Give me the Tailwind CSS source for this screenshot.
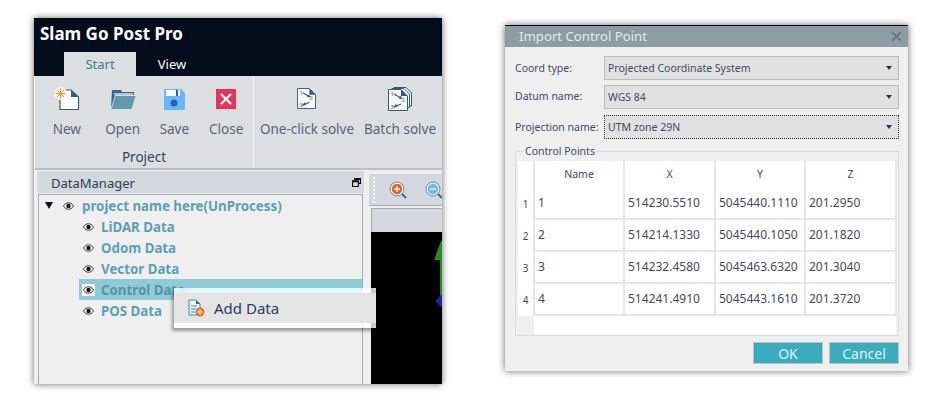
<!DOCTYPE html>
<html lang="en">
<head>
  <meta charset="UTF-8" />
  <title>Slam Go Post Pro</title>
  <script src="https://cdn.jsdelivr.net/npm/@tailwindcss/browser@4"></script>
</head>
<body class="bg-white font-['Noto_Sans',sans-serif]">
  <svg class="hidden">
    <symbol id="eye" viewBox="0 0 12 8">
      <path d="M0.5 4C2.5 1 4 .5 6 .5S9.5 1 11.5 4C9.5 7 8 7.500 6 7.500S2.500 7 .5 4Z" fill="#fff" stroke="#222" stroke-width="1"/>
      <circle cx="6" cy="4" r="2.400" fill="#111"/>
    </symbol>
    <symbol id="solve" viewBox="0 0 20 22">
      <path d="M.5.500H13L19.500 7V21.500H.5Z" fill="#f7f8f9" stroke="#2f5c7c"/>
      <path d="M13 .5L19.500 7H13Z" fill="#2f5c7c"/>
      <text x="2.500" y="7" font-size="6" font-weight="700" fill="#ee7f35">1</text>
      <text x="13.500" y="13" font-size="6" font-weight="700" fill="#ee7f35">2</text>
      <text x="2.500" y="20" font-size="6" font-weight="700" fill="#ee7f35">3</text>
      <path d="M6 5L13 9M13 15L6 18" stroke="#2f5c7c" stroke-width="1.200"/>
      <path d="M14.500 10L10.500 9.500L12.500 6.800ZM5 18.500L8 15L9.500 17.800Z" fill="#2f5c7c"/>
    </symbol>
  </svg>

  <div class="w-[951px] h-[415px] overflow-hidden flex items-start pl-[34px] pt-[18px] gap-[63px]">

    <!-- main window -->
    <div class="relative w-[408px] h-[366px] shrink-0 bg-[#efefef] shadow-[0_0_7px_rgba(0,0,0,0.6)]">
      <div class="h-[58px] bg-[#020c1b] relative">
        <div class="pl-[6px] pt-[4px] text-[17px] leading-[24px] font-bold text-white">Slam Go Post Pro</div>
        <div class="absolute left-[30px] bottom-0 flex text-[13px]">
          <div class="w-[72px] h-[24px] bg-[#dcdfe2] text-[#3b7d94] flex items-center justify-center pt-[2px]">Start</div>
          <div class="w-[72px] h-[24px] text-white flex items-center justify-center pt-[2px]">View</div>
        </div>
      </div>

      <div class="h-[92px] flex bg-[#dcdfe2] border-b-2 border-[#bcc0c4] border-l border-l-white text-[13.500px] text-[#57627a] box-content">
        <div class="w-[219px] border-r border-[#f5f6f6] flex flex-col">
          <div class="flex pl-[3px] pt-[11px]">
            <div class="w-[58px] flex flex-col items-center">
              <svg class="h-[24px] w-[26px]" viewBox="0 0 26 24">
                <path d="M6 3H17L24.500 10V22.500H6Z" fill="#fff" stroke="#2f5c7c" stroke-width="1.200"/>
                <path d="M17 3L24.500 10H17Z" fill="#2f5c7c"/>
                <circle cx="6.500" cy="6.500" r="6.500" fill="#f6f6f6"/>
                <path d="M6.500 1.500V11.500M1.500 6.500H11.500M3 3L10 10M10 3L3 10" stroke="#ee8a2c" stroke-width="1"/>
                <circle cx="6.500" cy="6.500" r="2" fill="#f5a623"/>
              </svg>
              <span class="mt-[8px] leading-[20px]">New</span>
            </div>
            <div class="w-[54px] flex flex-col items-center">
              <svg class="h-[24px] w-[26px]" viewBox="0 0 26 24">
                <path d="M2 3H11L12 5H24V8H5L1 21Z" fill="#3b6a8a"/>
                <path d="M4 7H23" stroke="#fff" stroke-width="1.200"/>
                <path d="M5.500 9H25.500L21.500 22H1.500Z" fill="#5f9bad"/>
              </svg>
              <span class="mt-[8px] leading-[20px]">Open</span>
            </div>
            <div class="w-[50px] flex flex-col items-center">
              <svg class="h-[24px] w-[24px]" viewBox="0 0 24 24">
                <path d="M2 2H19L23 6V23H2Z" fill="#66b7fd"/>
                <path d="M4 3H18V9H4Z" fill="#fff"/>
                <path d="M14 3H16V9H14Z" fill="#2d62a8"/>
                <circle cx="12" cy="16" r="3.500" fill="#2d62a8"/>
              </svg>
              <span class="mt-[8px] leading-[20px]">Save</span>
            </div>
            <div class="w-[54px] flex flex-col items-center">
              <svg class="h-[24px] w-[24px]" viewBox="0 0 24 24">
                <rect x="2" y="2" width="20" height="20" fill="#e1375a"/>
                <path d="M7 7L17 17M17 7L7 17" stroke="#fff" stroke-width="2.200"/>
              </svg>
              <span class="mt-[8px] leading-[20px]">Close</span>
            </div>
          </div>
          <div class="mt-[8px] text-center text-[#2e4566] leading-[20px]">Project</div>
        </div>
        <div class="flex pt-[11px] items-start">
          <div class="w-[106px] flex flex-col items-center">
            <svg class="h-[24px] w-[22px]"><use href="#solve" x="1" y="1" width="19" height="21"/></svg>
            <span class="mt-[8px] leading-[20px] whitespace-nowrap">One-click solve</span>
          </div>
          <div class="w-[80px] flex flex-col items-center">
            <svg class="h-[24px] w-[26px]" viewBox="0 0 26 24">
              <path d="M7 .5H19L24.500 6V19H7Z" fill="#f7f8f9" stroke="#2f5c7c"/>
              <path d="M5 1.500H17L22.500 7V20.500H5Z" fill="#f7f8f9" stroke="#2f5c7c"/>
              <use href="#solve" x="1" y="2" width="20" height="22"/>
            </svg>
            <span class="mt-[8px] leading-[20px] whitespace-nowrap">Batch solve</span>
          </div>
        </div>
      </div>

      <div class="flex h-[214px] pl-[3px] pt-[1px]">
        <div class="w-[327px] flex flex-col">
          <div class="h-[22px] bg-[#d3d8df] flex items-center justify-between pl-[14px] pr-[3px] text-[13px] text-[#2c3e55]">
            <span class="pt-[3px]">DataManager</span>
            <svg class="w-[9px] h-[9px]" viewBox="0 0 10 10" fill="none" stroke="#000" stroke-width="1.200">
              <path d="M3 2.500V.6H9.400V6H7.500"/>
              <path d="M.6 3H7V9.400H.6Z" fill="#d3d8df"/>
              <path d="M3 1.500H9M.6 4H7" />
            </svg>
          </div>
          <div class="mt-[1px] ml-[1px] w-[325px] flex-1 border border-b-0 border-[#9fadb5] text-[13.300px] font-bold text-[#5b9fb6]">
            <div class="h-[21px] flex items-center">
              <div class="ml-[6px] w-0 h-0 border-x-[4px] border-x-transparent border-t-[7px] border-t-[#111]"></div>
              <svg class="ml-[10px] w-[11px] h-[8px]"><use href="#eye"/></svg>
              <span class="ml-[8px] pt-[2px]">project name here(UnProcess)</span>
            </div>
            <div class="h-[21px] flex items-center pl-[44px]">
              <svg class="w-[11px] h-[8px]"><use href="#eye"/></svg>
              <span class="ml-[7px] pt-[2px]">LiDAR Data</span>
            </div>
            <div class="h-[21px] flex items-center pl-[44px]">
              <svg class="w-[11px] h-[8px]"><use href="#eye"/></svg>
              <span class="ml-[7px] pt-[2px]">Odom Data</span>
            </div>
            <div class="h-[21px] flex items-center pl-[44px]">
              <svg class="w-[11px] h-[8px]"><use href="#eye"/></svg>
              <span class="ml-[7px] pt-[2px]">Vector Data</span>
            </div>
            <div class="h-[21px] w-[283px] ml-[40px] flex items-center bg-[#8ecbd6] pl-[3px] text-[#5594a8]">
              <div class="bg-white w-[13px] h-[12px] flex items-center justify-center">
                <svg class="w-[11px] h-[8px]"><use href="#eye"/></svg>
              </div>
              <span class="ml-[6px] pt-[2px]">Control Data</span>
            </div>
            <div class="h-[21px] flex items-center pl-[44px]">
              <svg class="w-[11px] h-[8px]"><use href="#eye"/></svg>
              <span class="ml-[7px] pt-[2px]">POS Data</span>
            </div>
          </div>
        </div>

        <div class="ml-[5px] flex-1 flex flex-col overflow-hidden relative">
          <div class="mt-[3px] h-[32px] bg-[#d3d8df] border-b border-[#9fadb5] flex items-center pl-[4px]">
            <div class="w-[2px] h-[26px] border-l-2 border-dotted border-[#f5f5f5]"></div>
            <svg class="ml-[14px] w-[18px] h-[18px] shrink-0" viewBox="0 0 18 18">
              <path d="M12 12L17 17" stroke="#3b6a8a" stroke-width="2"/>
              <circle cx="8" cy="8" r="7" fill="#e8eef2" stroke="#6d8a9c"/>
              <circle cx="8" cy="8" r="5.200" fill="#e2641a"/>
              <path d="M8 5V11M5 8H11" stroke="#fff" stroke-width="1.300"/>
            </svg>
            <svg class="ml-[18px] w-[18px] h-[18px] shrink-0" viewBox="0 0 18 18">
              <path d="M12 12L17 17" stroke="#3b6a8a" stroke-width="2"/>
              <circle cx="8" cy="8" r="7" fill="#e8eef2" stroke="#6d8a9c"/>
              <circle cx="8" cy="8" r="5.200" fill="#6bb8f5"/>
              <path d="M5 8H11" stroke="#fff" stroke-width="1.300"/>
            </svg>
          </div>
          <div class="ml-[2px] mt-[2px] h-[24px] bg-[#d3d8df] border border-[#9fadb5] border-b-0 border-r-0"></div>
          <div class="ml-[2px] flex-1 bg-black"></div>
          <!-- axis drawn in the viewer -->
          <svg class="absolute left-[64px] top-[68px] w-[9px] h-[70px]" viewBox="0 0 9 70">
            <path d="M8 2L1 21H7V57H9V2Z" fill="#2a8a24"/>
            <path d="M2 62L8 56H9V68H8Z" fill="#22229a"/>
          </svg>
        </div>
      </div>

      <!-- context menu -->
      <div class="absolute left-[140px] top-[270px] w-[202px] h-[40px] bg-white/80 py-[5px] shadow-[-2px_3px_3px_rgba(0,0,0,0.35)] flex">
        <div class="w-full h-[30px] bg-[#e4e4e4] flex items-center pl-[14px]">
          <svg class="w-[17px] h-[18px]" viewBox="0 0 17 18">
            <path d="M1 1H8L12 5V16H1Z" fill="#eaf5fb" stroke="#3a8fb0"/>
            <path d="M8 1L12 5H8Z" fill="#2f6f8c"/>
            <path d="M3 7H9M3 10H8M3 13H7" stroke="#3a8fb0"/>
            <circle cx="12" cy="13" r="4.500" fill="#ee7422"/>
            <path d="M12 10.500V15.500M9.500 13H14.500" stroke="#fff" stroke-width="1.200"/>
          </svg>
          <span class="ml-[9px] text-[15px] text-[#2b3c5e] pt-[1px]">Add Data</span>
        </div>
      </div>
    </div>

    <!-- import dialog -->
    <div class="w-[403px] h-[346px] mt-[7px] shrink-0 bg-[#efefef] border-t border-black shadow-[0_0_7px_rgba(0,0,0,0.6)] text-[10.500px] text-[#3d4a66]">
      <div class="h-[21px] bg-[#8a9ea3] flex items-center justify-between pl-[14px] pr-[6px] text-[13.200px] text-[#e3eaec]">
        <span>Import Control Point</span>
        <svg class="w-[11px] h-[11px]" viewBox="0 0 11 11"><path d="M1 1L10 10M10 1L1 10" stroke="#5f7075" stroke-width="1.600"/></svg>
      </div>

      <div class="flex flex-col pl-[10px] pr-[9px] pt-[9px]">
        <div class="flex items-center h-[24px]">
          <span class="w-[89px] pt-[2px]">Coord type:</span>
          <div class="flex-1 h-full bg-[#e1e1e1] border border-[#bbb] flex items-center justify-between pl-[3px] pr-[6px]">
            <span class="pt-[2px]">Projected Coordinate System</span>
            <div class="w-0 h-0 border-x-[3px] border-x-transparent border-t-[4px] border-t-[#1f3350]"></div>
          </div>
        </div>
        <div class="flex items-center h-[24px] mt-[5px]">
          <span class="w-[89px]">Datum name:</span>
          <div class="flex-1 h-full bg-[#e1e1e1] border border-[#bbb] flex items-center justify-between pl-[3px] pr-[6px]">
            <span class="pt-[2px]">WGS 84</span>
            <div class="w-0 h-0 border-x-[3px] border-x-transparent border-t-[4px] border-t-[#1f3350]"></div>
          </div>
        </div>
        <div class="flex items-center h-[24px] mt-[6px]">
          <span class="w-[89px] pt-[2px] whitespace-nowrap">Projection name:</span>
          <div class="flex-1 h-full bg-[#e1e1e1] border border-dotted border-[#333] flex items-center justify-between pl-[3px] pr-[6px]">
            <span class="pt-[2px]">UTM zone 29N</span>
            <div class="w-0 h-0 border-x-[3px] border-x-transparent border-t-[4px] border-t-[#1f3350]"></div>
          </div>
        </div>

        <div class="relative mt-[12px] h-[185px] border border-[#dcdcdc] pl-[2px] pt-[9px]">
          <span class="absolute left-[8px] -top-[8px] px-[1px] bg-[#efefef] leading-[15px]">Control Points</span>
          <table class="table-fixed border-collapse w-[378px] bg-white text-[12px] text-[#3d4a66]">
            <colgroup>
              <col class="w-[16px]" /><col class="w-[90px]" /><col class="w-[91px]" /><col class="w-[90px]" /><col class="w-[91px]" />
            </colgroup>
            <thead>
              <tr class="h-[26px] text-[10.500px] font-normal">
                <th class="font-normal border-r-2 border-[#e6e6e6]"></th>
                <th class="font-normal border-r-2 border-[#e6e6e6] pt-[2px]">Name</th>
                <th class="font-normal border-r-2 border-[#e6e6e6] pt-[2px]">X</th>
                <th class="font-normal border-r-2 border-[#e6e6e6] pt-[2px]">Y</th>
                <th class="font-normal border-r-2 border-[#e6e6e6] pt-[2px]">Z</th>
              </tr>
            </thead>
            <tbody>
              <tr class="h-[32px]">
                <td class="text-[10px] text-center pt-[2px]">1</td>
                <td class="pl-[3px] border-x-2 border-b-2 border-[#e6e6e6]">1</td>
                <td class="pl-[3px] border-x-2 border-b-2 border-[#e6e6e6]">514230.5510</td>
                <td class="pl-[3px] border-x-2 border-b-2 border-[#e6e6e6]">5045440.1110</td>
                <td class="pl-[3px] border-x-2 border-b-2 border-[#e6e6e6]">201.2950</td>
              </tr>
              <tr class="h-[32px]">
                <td class="text-[10px] text-center pt-[2px]">2</td>
                <td class="pl-[3px] border-x-2 border-b-2 border-[#e6e6e6]">2</td>
                <td class="pl-[3px] border-x-2 border-b-2 border-[#e6e6e6]">514214.1330</td>
                <td class="pl-[3px] border-x-2 border-b-2 border-[#e6e6e6]">5045440.1050</td>
                <td class="pl-[3px] border-x-2 border-b-2 border-[#e6e6e6]">201.1820</td>
              </tr>
              <tr class="h-[32px]">
                <td class="text-[10px] text-center pt-[2px]">3</td>
                <td class="pl-[3px] border-x-2 border-b-2 border-[#e6e6e6]">3</td>
                <td class="pl-[3px] border-x-2 border-b-2 border-[#e6e6e6]">514232.4580</td>
                <td class="pl-[3px] border-x-2 border-b-2 border-[#e6e6e6]">5045463.6320</td>
                <td class="pl-[3px] border-x-2 border-b-2 border-[#e6e6e6]">201.3040</td>
              </tr>
              <tr class="h-[32px]">
                <td class="text-[10px] text-center pt-[2px]">4</td>
                <td class="pl-[3px] border-x-2 border-b-2 border-[#e6e6e6]">4</td>
                <td class="pl-[3px] border-x-2 border-b-2 border-[#e6e6e6]">514241.4910</td>
                <td class="pl-[3px] border-x-2 border-b-2 border-[#e6e6e6]">5045443.1610</td>
                <td class="pl-[3px] border-x-2 border-b-2 border-[#e6e6e6]">201.3720</td>
              </tr>
            </tbody>
          </table>
          <div class="flex w-[378px] h-[18px]">
            <div class="w-[16px] bg-[#efefef]"></div>
            <div class="flex-1 bg-white"></div>
          </div>
        </div>

        <div class="flex justify-end gap-[6px] mt-[6px]">
          <button class="w-[70px] h-[22px] bg-[#3aacbe] border border-[#b8c4c6] text-[14px] text-[#dff2f5] flex items-center justify-center">OK</button>
          <button class="w-[70px] h-[22px] bg-[#3aacbe] border border-[#b8c4c6] text-[14px] text-[#dff2f5] flex items-center justify-center">Cancel</button>
        </div>
      </div>
    </div>
  </div>
</body>
</html>
